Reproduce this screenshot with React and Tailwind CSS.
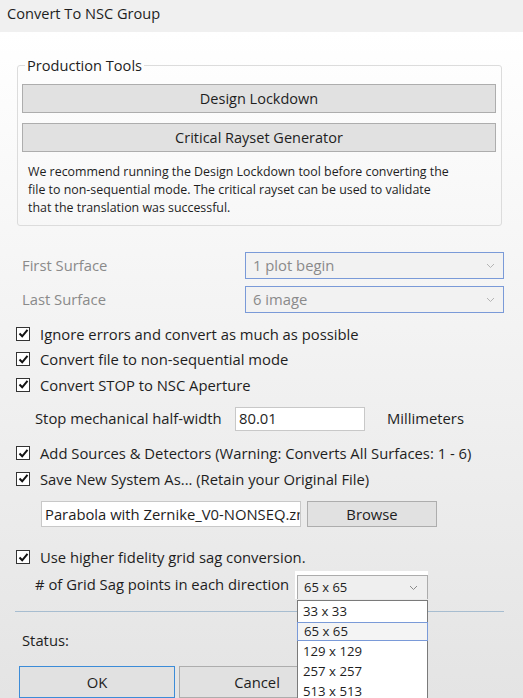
import React from "react";

const font = { fontFamily: '"Open Sans", "Noto Sans", sans-serif' };

function Check() {
  return (
    <span className="w-[14px] h-[14px] border border-[#333333] bg-white flex items-center justify-center shrink-0">
      <svg width="11" height="11" viewBox="0 0 11 11">
        <path d="M1.5 5.5 L4.2 8.3 L9.5 1.8" fill="none" stroke="#111" strokeWidth="2" />
      </svg>
    </span>
  );
}

function CheckRow({ children, className = "" }) {
  return (
    <div className={`h-[26px] flex items-center pl-[16px] gap-[10px] text-[14.8px] text-[#1e1e1e] ${className}`}>
      <Check />
      <span>{children}</span>
    </div>
  );
}

function Chevron({ color = "#b4b4b4" }) {
  return (
    <svg width="9" height="6" viewBox="0 0 9 6">
      <path d="M1 1 L4.5 4.5 L8 1" fill="none" stroke={color} strokeWidth="1" />
    </svg>
  );
}

function Select({ value }) {
  return (
    <div className="ml-auto mr-[19px] w-[259px] h-[27px] border border-[#7a9ad8] bg-[#f2f2f2] flex items-center justify-between pl-[7px] pr-[8px] text-[14.8px] text-[#8a8a8a]">
      <span>{value}</span>
      <Chevron />
    </div>
  );
}

export default function App() {
  return (
    <div className="w-[523px] h-[698px] overflow-hidden relative" style={font}>
      {/* Title */}
      <div className="h-[32px] bg-[#f0f0f0] flex items-start pt-[3px] pl-[7px] text-[14.6px] leading-[20px] text-[#1e1e1e]">
        Convert To NSC Group
      </div>

      <div className="h-[666px] bg-gradient-to-b from-white to-[#e4e4e4] flex flex-col">
        {/* Production tools */}
        <fieldset className="mt-[23px] ml-[17px] w-[485px] border border-[#dcdcdc] rounded-[3px] pl-[4px] pr-[5px] pb-[8px]">
          <legend className="ml-[3px] px-[2px] text-[14.6px] leading-[20px] text-[#1e1e1e]">Production Tools</legend>
          <button className="mt-[9px] w-[474px] h-[29px] bg-[#e1e1e1] border border-[#adadad] text-[14.5px] text-[#1e1e1e] flex items-center justify-center">
            Design Lockdown
          </button>
          <button className="mt-[10px] w-[474px] h-[29px] bg-[#e1e1e1] border border-[#adadad] text-[14.5px] text-[#1e1e1e] flex items-center justify-center">
            Critical Rayset Generator
          </button>
          <p className="mt-[11px] pl-[6px] text-[12.4px] leading-[18px] text-[#1e1e1e]">
            We recommend running the Design Lockdown tool before converting the
            <br />
            file to non-sequential mode. The critical rayset can be used to validate
            <br />
            that the translation was successful.
          </p>
        </fieldset>

        {/* Surfaces */}
        <div className="mt-[26px] flex items-center pl-[22px] text-[14.8px] text-[#8a8a8a]">
          <span>First Surface</span>
          <Select value="1 plot begin" />
        </div>
        <div className="mt-[7px] flex items-center pl-[22px] text-[14.8px] text-[#8a8a8a]">
          <span>Last Surface</span>
          <Select value="6 image" />
        </div>

        <CheckRow className="mt-[8px]">Ignore errors and convert as much as possible</CheckRow>
        <CheckRow>Convert file to non-sequential mode</CheckRow>
        <CheckRow>Convert STOP to NSC Aperture</CheckRow>

        <div className="mt-[8px] h-[26px] flex items-center pl-[35px] text-[14.8px] text-[#1e1e1e]">
          <span className="w-[200px]">Stop mechanical half-width</span>
          <div className="w-[130px] h-[24px] bg-white border border-[#c8c8c8] flex items-center pl-[3px]">80.01</div>
          <span className="ml-[22px]">Millimeters</span>
        </div>

        <CheckRow className="mt-[9px]">Add Sources &amp; Detectors (Warning: Converts All Surfaces: 1 - 6)</CheckRow>
        <CheckRow>Save New System As... (Retain your Original File)</CheckRow>

        <div className="mt-[10px] flex items-center pl-[41px] gap-[6px] text-[14.8px] text-[#1e1e1e]">
          <div className="w-[260px] h-[26px] bg-white border border-[#c8c8c8] flex items-center pl-[3px] overflow-hidden whitespace-nowrap">
            Parabola with Zernike_V0-NONSEQ.zmx
          </div>
          <button className="w-[130px] h-[26px] bg-[#e1e1e1] border border-[#adadad] flex items-center justify-center">
            Browse
          </button>
        </div>

        <CheckRow className="mt-[17px]">Use higher fidelity grid sag conversion.</CheckRow>

        <div className="mt-[1px] h-[28px] flex items-start pl-[35px] text-[14.8px] text-[#1e1e1e]">
          <span className="leading-[26px] w-[260px]">
            # of Grid Sag points in each direction
          </span>
          <div className="bg-white pt-[4px] pl-[2px]">
            <div className="w-[131px] h-[24px] border border-[#acacac] border-b-0 bg-[#efefef] flex items-center justify-between pl-[6px] pr-[9px] text-[13px]">
              <span>65 x 65</span>
              <Chevron color="#8a8a8a" />
            </div>
          </div>
        </div>

        <div className="mt-[12px] ml-[15px] w-[489px] h-px bg-[#a7bdd0]" />

        <div className="mt-[18px] h-[20px] flex items-center pl-[22px] text-[14.8px] text-[#1e1e1e]">
          Status:
        </div>

        <div className="mt-[16px] flex pl-[19px] gap-[4px] text-[14.8px] text-[#1e1e1e]">
          <button className="w-[156px] h-[32px] bg-[#e1e1e1] border border-[#3c8cd8] flex items-center justify-center">OK</button>
          <button className="w-[156px] h-[32px] bg-[#e1e1e1] border border-[#adadad] flex items-center justify-center">Cancel</button>
        </div>
      </div>

      {/* Open dropdown list */}
      <div className="absolute left-[297px] top-[600px] w-[131px] h-[110px] bg-white border border-[#7a7a7a] text-[13.2px] text-[#1e1e1e] pt-[1px]">
        <div className="h-[20px] flex items-center pl-[5px]">33 x 33</div>
        <div className="h-[19px] flex items-center border border-[#7a9ad8] bg-[#f4f4f4] mx-[-1px] pl-[6px]">65 x 65</div>
        <div className="h-[21px] flex items-center pl-[5px]">129 x 129</div>
        <div className="h-[20px] flex items-center pl-[5px]">257 x 257</div>
        <div className="h-[20px] flex items-center pl-[5px]">513 x 513</div>
      </div>
    </div>
  );
}
